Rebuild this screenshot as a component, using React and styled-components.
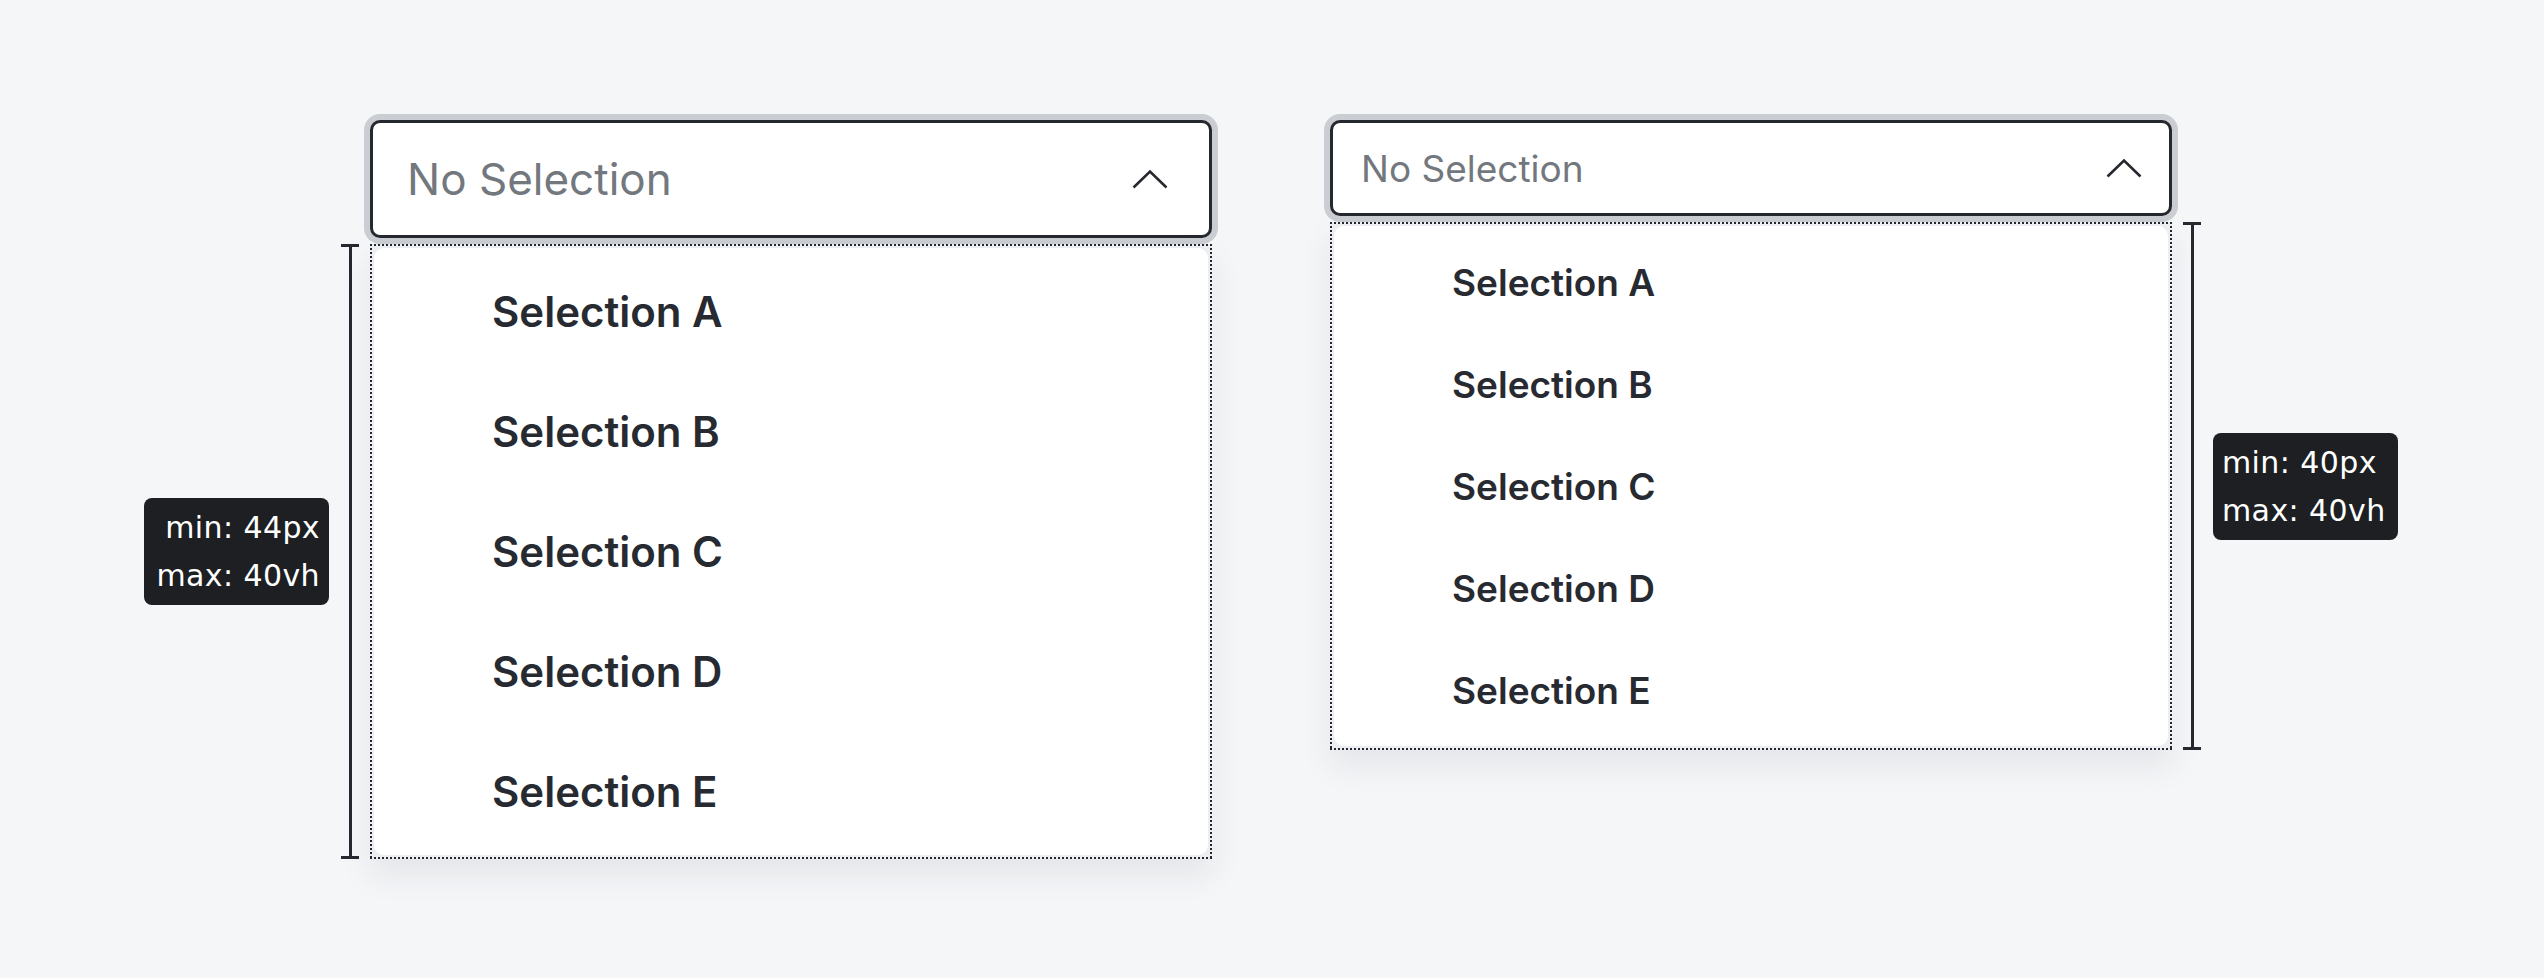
import React from "react";
import styled, { createGlobalStyle } from "styled-components";

const sizes = {
  lg: { header: 118, font: 42, placeholder: 44, padL: 34, padR: 41, item: 120, listPad: 3.5 },
  md: { header: 96, font: 37, placeholder: 37, padL: 28, padR: 27, item: 102, listPad: 5 },
};

const items = ["Selection A", "Selection B", "Selection C", "Selection D", "Selection E"];

function Chevron() {
  return (
    <svg width="36" height="20" viewBox="0 0 36 20" fill="none">
      <polyline points="1.5,18.5 18,2.5 34.5,18.5" stroke="#25282e" strokeWidth="2.6" />
    </svg>
  );
}

function Annotation({ side, min }) {
  const label = (
    <Label $side={side}>
      <div>min: {min}</div>
      <div>max: 40vh</div>
    </Label>
  );
  return (
    <AnnotationWrap>
      {side === "left" && label}
      <Bracket>
        <Tick />
        <Line />
        <Tick />
      </Bracket>
      {side === "right" && label}
    </AnnotationWrap>
  );
}

function Dropdown({ size, side, min }) {
  const s = sizes[size];
  return (
    <Group $side={side}>
      <Header $s={s}>
        <Placeholder $s={s}>No Selection</Placeholder>
        <Chevron />
      </Header>
      <Annotation side={side} min={min} />
      <ListFrame>
        <ListBody $s={s}>
          {items.map((item) => (
            <Item key={item} $s={s}>{item}</Item>
          ))}
        </ListBody>
      </ListFrame>
    </Group>
  );
}

export default function App() {
  return (
    <>
      <GlobalStyle />
      <Page>
        <Dropdown size="lg" side="left" min="44px" />
        <Dropdown size="md" side="right" min="40px" />
      </Page>
    </>
  );
}

const GlobalStyle = createGlobalStyle`
  html, body {
    margin: 0;
    background: #f5f6f8;
  }
  body {
    font-family: Inter, "Noto Sans", sans-serif;
  }
`;

const Page = styled.div`
  display: flex;
  align-items: flex-start;
  gap: 118px;
  padding: 120px 0 0 144px;
  min-height: 100vh;
  box-sizing: border-box;
`;

const Group = styled.div`
  display: grid;
  grid-template-columns: ${(p) => (p.$side === "left" ? "auto 842px" : "842px auto")};
  grid-template-areas: ${(p) =>
    p.$side === "left" ? `". header" "note list"` : `"header ." "list note"`};
  column-gap: 11px;
  row-gap: 6px;
`;

const Header = styled.div`
  grid-area: header;
  height: ${(p) => p.$s.header}px;
  box-sizing: border-box;
  display: flex;
  align-items: center;
  justify-content: space-between;
  padding: 0 ${(p) => p.$s.padR}px 0 ${(p) => p.$s.padL}px;
  background: #fff;
  border: 3px solid #25282e;
  border-radius: 10px;
  box-shadow: 0 0 0 6px #caced2;
`;

const Placeholder = styled.span`
  font-size: ${(p) => p.$s.placeholder}px;
  font-weight: 400;
  color: #73777e;
`;

/* square 2px dots, 2px apart, drawn as a frame round the list */
const dotsX = "linear-gradient(to right, #25282e 50%, transparent 0)";
const dotsY = "linear-gradient(to bottom, #25282e 50%, transparent 0)";

const ListFrame = styled.div`
  grid-area: list;
  padding: 4px;
  background:
    ${dotsX} top left / 4px 2px repeat-x,
    ${dotsX} bottom left / 4px 2px repeat-x,
    ${dotsY} top left / 2px 4px repeat-y,
    ${dotsY} top right / 2px 4px repeat-y,
    #eceef1;
  box-shadow: 0 16px 30px rgba(30, 35, 45, 0.08);
`;

const ListBody = styled.div`
  display: flex;
  flex-direction: column;
  padding: ${(p) => p.$s.listPad}px 0;
  background: #fff;
  border-radius: 10px;
`;

const Item = styled.div`
  height: ${(p) => p.$s.item}px;
  display: flex;
  align-items: center;
  padding-left: 118px;
  font-size: ${(p) => p.$s.font}px;
  font-weight: 600;
  color: #272a30;
`;

const AnnotationWrap = styled.div`
  grid-area: note;
  display: flex;
  align-items: center;
  gap: 12px;
`;

const Bracket = styled.div`
  align-self: stretch;
  width: 18px;
  display: flex;
  flex-direction: column;
  align-items: center;
`;

const Tick = styled.div`
  width: 18px;
  height: 3px;
  background: #25282e;
`;

const Line = styled.div`
  flex: 1;
  width: 3px;
  background: #25282e;
`;

const Label = styled.div`
  width: 185px;
  height: 107px;
  box-sizing: border-box;
  padding: 6px 9px 4px 9px;
  background: #1d1f23;
  border-radius: 8px;
  color: #fff;
  font-family: "DejaVu Sans", sans-serif;
  font-size: 30px;
  line-height: 48px;
  letter-spacing: 0.4px;
  white-space: nowrap;
  text-align: ${(p) => (p.$side === "left" ? "right" : "left")};
`;
